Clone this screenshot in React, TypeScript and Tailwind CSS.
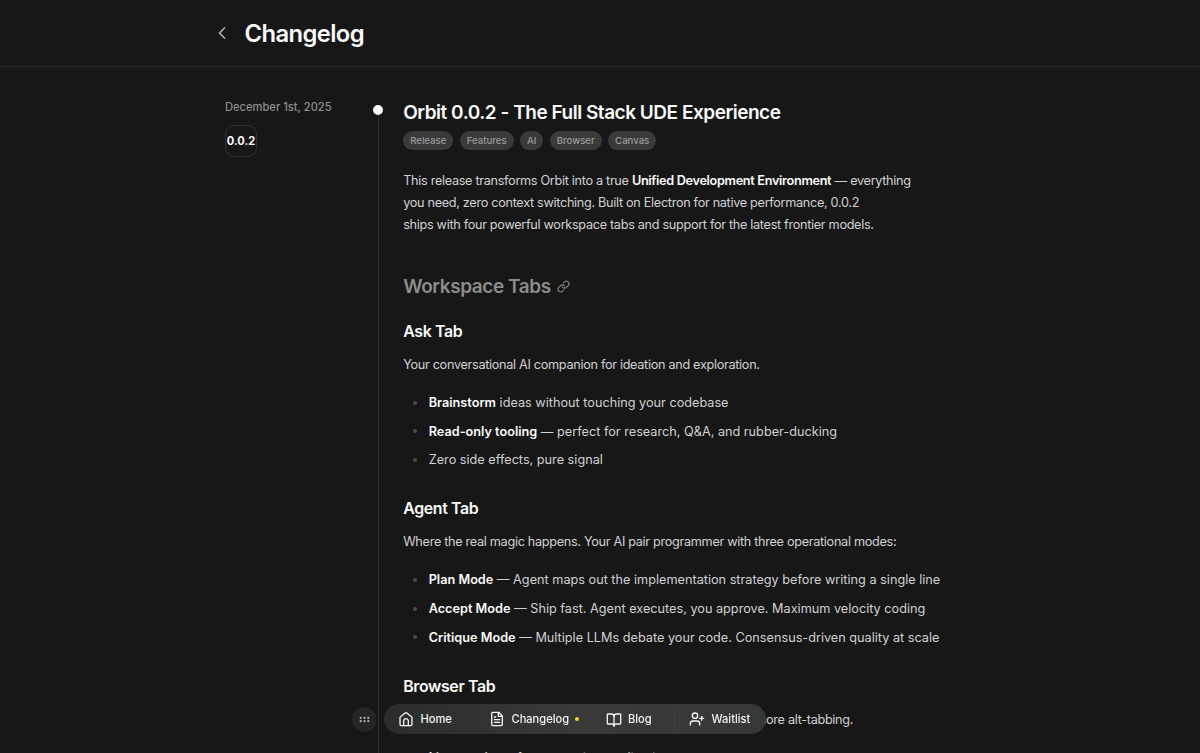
import { BookOpen, ChevronLeft, GripHorizontal, Link, UserPlus } from "lucide-react";
import type { ReactNode } from "react";

type Item = { lead?: string; text: string };

const tags = ["Release", "Features", "AI", "Browser", "Canvas"];

const askItems: Item[] = [
  { lead: "Brainstorm", text: " ideas without touching your codebase" },
  { lead: "Read-only tooling", text: " — perfect for research, Q&A, and rubber-ducking" },
  { text: "Zero side effects, pure signal" },
];

const agentItems: Item[] = [
  { lead: "Plan Mode", text: " — Agent maps out the implementation strategy before writing a single line" },
  { lead: "Accept Mode", text: " — Ship fast. Agent executes, you approve. Maximum velocity coding" },
  { lead: "Critique Mode", text: " — Multiple LLMs debate your code. Consensus-driven quality at scale" },
];

const browserItems: Item[] = [{ lead: "Live preview", text: " of your running application" }];

function StrokeIcon({ children }: { children: ReactNode }) {
  return (
    <svg
      viewBox="0 0 24 24"
      fill="none"
      stroke="currentColor"
      strokeWidth="2"
      strokeLinecap="round"
      strokeLinejoin="round"
      className="size-[16px]"
    >
      {children}
    </svg>
  );
}

function HomeIcon() {
  return (
    <StrokeIcon>
      <path d="M3 10.2a2 2 0 0 1 .8-1.6l7-5.6a2 2 0 0 1 2.4 0l7 5.6a2 2 0 0 1 .8 1.6V20a2 2 0 0 1-2 2H5a2 2 0 0 1-2-2z" />
      <path d="M8.5 22v-7a3.5 3.5 0 0 1 7 0v7" />
    </StrokeIcon>
  );
}

function DocIcon() {
  return (
    <StrokeIcon>
      <path d="M6 2h8.5L20 7.5V20a2 2 0 0 1-2 2H6a2 2 0 0 1-2-2V4a2 2 0 0 1 2-2z" />
      <path d="M14 2v6h6" />
      <path d="M8 9h2" />
      <path d="M8 13h8" />
      <path d="M8 17h8" />
    </StrokeIcon>
  );
}

function Section({ title, intro, items }: { title: string; intro: ReactNode; items: Item[] }) {
  return (
    <section className="mb-[26.5px]">
      <h3 className="text-[15.9px] leading-[24px] font-semibold tracking-[-0.35px] text-[#fafafa]">{title}</h3>
      <p className="mt-[10px] leading-[22.25px] tracking-[-0.025em]">{intro}</p>
      <ul className="mt-[15.5px] flex flex-col gap-[6.6px]">
        {items.map((item) => (
          <li key={item.text} className="flex h-[22px] items-center whitespace-nowrap">
            <span aria-hidden className="mr-[11.5px] ml-[10px] size-[4px] rounded-full bg-[#4a4c52]" />
            <span>
              {item.lead && <strong className="font-semibold text-[#fafafa]">{item.lead}</strong>}
              {item.text}
            </span>
          </li>
        ))}
      </ul>
    </section>
  );
}

function Dock() {
  return (
    <nav className="fixed top-[704px] left-[352px] flex h-[30px] items-center text-[11.1px] font-medium text-[#f4f4f4]">
      <button className="mr-[6.5px] flex size-[25px] items-center justify-center rounded-full bg-[#252525]">
        <GripHorizontal className="size-[13px] text-[#b5b5b5]" />
      </button>
      <div className="flex h-[30px] w-[382px] items-center rounded-full bg-linear-to-r from-[#2b2c2c] via-[#383a39] to-[#363837] pt-px pl-[14.5px]">
        <a className="flex w-[91px] items-center gap-[6.5px]">
          <HomeIcon />
          Home
        </a>
        <a className="flex w-[116.5px] items-center gap-[6.5px]">
          <DocIcon />
          Changelog
          <span className="-ml-px size-[4px] rounded-full bg-[#fcc934]" />
        </a>
        <a className="flex h-full w-[69px] items-center gap-[6.5px] border-r border-[#3e403f]">
          <BookOpen className="size-[16px]" />
          Blog
        </a>
        <a className="ml-[14.5px] flex items-center gap-[6.5px]">
          <UserPlus className="size-[16px]" />
          Waitlist
        </a>
      </div>
    </nav>
  );
}

export default function App() {
  return (
    <div className="h-[753px] overflow-hidden bg-[#171717] font-['Inter',sans-serif] text-[12.7px] text-[#d1d1d4]">
      <header className="flex h-[67px] items-center border-b border-[#272727] pl-[212px]">
        <ChevronLeft className="size-[20px] text-[#b0b0b0]" />
        <h1 className="mt-[2px] ml-[12.5px] text-[23.8px] leading-[30px] font-semibold tracking-[-0.6px] text-[#fafafa]">
          Changelog
        </h1>
      </header>

      <main className="flex pl-[225px]">
        <aside className="w-[148px] pt-[32px]">
          <time className="block text-[11.15px] leading-[16px] font-medium text-[#8e8e8e]">December 1st, 2025</time>
          <div className="mt-[9.5px] flex size-[32px] items-center justify-center rounded-[9px] border border-[#303030] pt-px text-[11.1px] font-bold text-[#fafafa]">
            0.0.2
          </div>
        </aside>

        <div aria-hidden className="flex w-[10px] flex-col items-center pt-[38.4px]">
          <span className="size-[10px] shrink-0 rounded-full bg-white" />
          <span className="h-[640px] w-px bg-[#303030]" />
        </div>

        <article className="w-[620px] pt-[34px] pl-[20.2px]">
          <h2 className="text-[19px] leading-[24px] font-semibold tracking-[-0.025em] text-[#fafafa]">
            Orbit 0.0.2 - The Full Stack UDE Experience
          </h2>
          <div className="mt-[6px] flex gap-[6.4px]">
            {tags.map((tag) => (
              <span
                key={tag}
                className="flex h-[19px] items-center rounded-full bg-[#3a3a3a] px-[7px] pt-px text-[9.6px] font-medium text-[#9a9a9a]"
              >
                {tag}
              </span>
            ))}
          </div>
          <p className="mt-[19.5px] leading-[22.25px] tracking-[-0.025em]">
            This release transforms Orbit into a true{" "}
            <strong className="font-semibold text-[#fafafa]">Unified Development Environment</strong> — everything
            <br />
            you need, zero context switching. Built on Electron for native performance, 0.0.2
            <br />
            ships with four powerful workspace tabs and support for the latest frontier models.
          </p>
          <h2 className="mt-[37.5px] mb-[20px] flex items-center gap-[6.5px] text-[19px] leading-[26px] font-semibold tracking-[-0.42px] text-[#8c8c8c]">
            Workspace Tabs
            <Link className="size-[13px]" />
          </h2>
          <Section title="Ask Tab" intro="Your conversational AI companion for ideation and exploration." items={askItems} />
          <Section
            title="Agent Tab"
            intro="Where the real magic happens. Your AI pair programmer with three operational modes:"
            items={agentItems}
          />
          <Section
            title="Browser Tab"
            intro="A full Chromium browser embedded into your workspace. No more alt-tabbing."
            items={browserItems}
          />
        </article>
      </main>
      <Dock />
    </div>
  );
}
